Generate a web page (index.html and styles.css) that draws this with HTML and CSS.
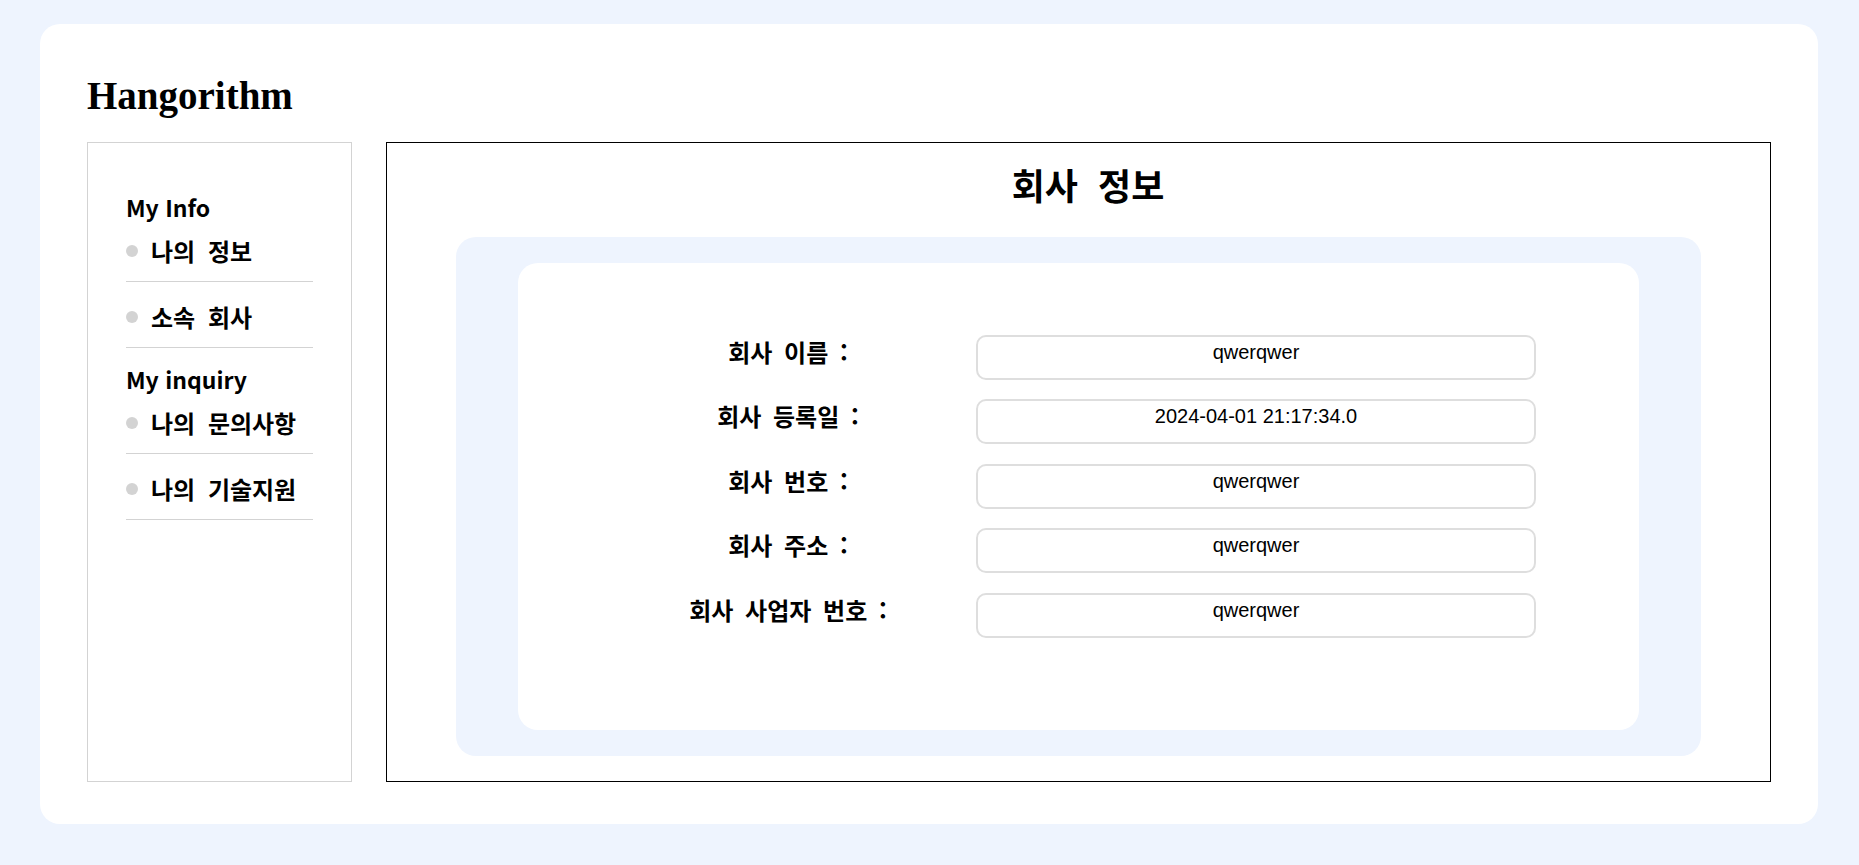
FILE: index.html
```html
<!DOCTYPE html>
<html lang="ko">
<head>
<meta charset="utf-8">
<title>Hangorithm - 회사 정보</title>
<link rel="stylesheet" href="styles.css">
</head>
<body>
<div class="page">
  <div class="card">
    <h1 class="brand">Hangorithm</h1>
    <div class="layout">
      <aside class="sidebar">
        <div class="menu-group-title">My Info</div>
        <ul class="menu">
          <li class="menu-item"><span class="dot"></span><span class="menu-text">나의 정보</span></li>
          <li class="menu-item"><span class="dot"></span><span class="menu-text">소속 회사</span></li>
        </ul>
        <div class="menu-group-title group-next">My inquiry</div>
        <ul class="menu">
          <li class="menu-item"><span class="dot"></span><span class="menu-text">나의 문의사항</span></li>
          <li class="menu-item"><span class="dot"></span><span class="menu-text">나의 기술지원</span></li>
        </ul>
      </aside>
      <main class="content">
        <h2 class="content-title">회사 정보</h2>
        <div class="panel">
          <div class="panel-inner">
            <div class="form">
              <div class="label">회사 이름 :</div>
              <div class="value">qwerqwer</div>
              <div class="label">회사 등록일 :</div>
              <div class="value">2024-04-01 21:17:34.0</div>
              <div class="label">회사 번호 :</div>
              <div class="value">qwerqwer</div>
              <div class="label">회사 주소 :</div>
              <div class="value">qwerqwer</div>
              <div class="label">회사 사업자 번호 :</div>
              <div class="value">qwerqwer</div>
            </div>
          </div>
        </div>
      </main>
    </div>
  </div>
</div>
</body>
</html>
```

FILE: styles.css
```css
html, body {
  margin: 0;
  padding: 0;
}

body {
  background: #eef4fe;
  font-family: "Noto Sans CJK KR", "Noto Sans", sans-serif;
  color: #000;
}

.page {
  padding: 24px 41px 41px 40px;
}

.card {
  background: #fff;
  border-radius: 20px;
  padding: 49px 47px 42px;
}

.brand {
  margin: 0 0 24px;
  font-family: "Liberation Serif", serif;
  font-weight: bold;
  font-size: 39px;
  line-height: 45px;
}

.layout {
  display: flex;
  gap: 34px;
  height: 640px;
}

.sidebar {
  flex: none;
  width: 265px;
  box-sizing: border-box;
  border: 1px solid #d3d3d3;
  padding: 49px 38px 0;
}

.menu-group-title {
  font-size: 23px;
  line-height: 30px;
  font-weight: bold;
}

.menu-group-title.group-next {
  margin-top: 16px;
}

.menu {
  list-style: none;
  margin: 0;
  padding: 0;
}

.menu-item {
  display: flex;
  align-items: center;
  padding: 18px 0 13px;
  border-bottom: 1px solid #d3d3d3;
  font-size: 24px;
  line-height: 34px;
  font-weight: bold;
  word-spacing: 6px;
}

.menu-item:first-child {
  padding-top: 12px;
}

.dot {
  flex: none;
  width: 12px;
  height: 12px;
  border-radius: 50%;
  background: #d3d3d3;
  margin-right: 13px;
}

.content {
  flex: 1;
  border: 1px solid #000;
  padding-top: 15px;
  display: flex;
  flex-direction: column;
  align-items: center;
}

.content-title {
  margin: 0;
  padding-left: 19px;
  font-size: 36px;
  line-height: 52px;
  font-weight: bold;
  word-spacing: 10px;
}

.panel {
  margin-top: 27px;
  width: 90%;
  height: 519px;
  background: #eef4fe;
  border-radius: 20px;
  display: flex;
  align-items: center;
  justify-content: center;
}

.panel-inner {
  width: 90%;
  height: 90%;
  box-sizing: border-box;
  background: #fff;
  border-radius: 20px;
  padding-top: 72px;
}

.form {
  display: grid;
  grid-template-columns: 334px 560px;
  grid-auto-rows: 45px;
  column-gap: 21px;
  row-gap: 19.5px;
  justify-content: center;
}

.label {
  align-self: start;
  text-align: center;
  font-size: 24px;
  line-height: 34px;
  font-weight: bold;
  word-spacing: 5px;
}

.value {
  box-sizing: border-box;
  height: 45px;
  border: 2px solid #dedede;
  border-radius: 10px;
  padding-top: 4px;
  text-align: center;
  font-family: "Liberation Sans", Arial, sans-serif;
  font-size: 20px;
  line-height: 23px;
}
```
